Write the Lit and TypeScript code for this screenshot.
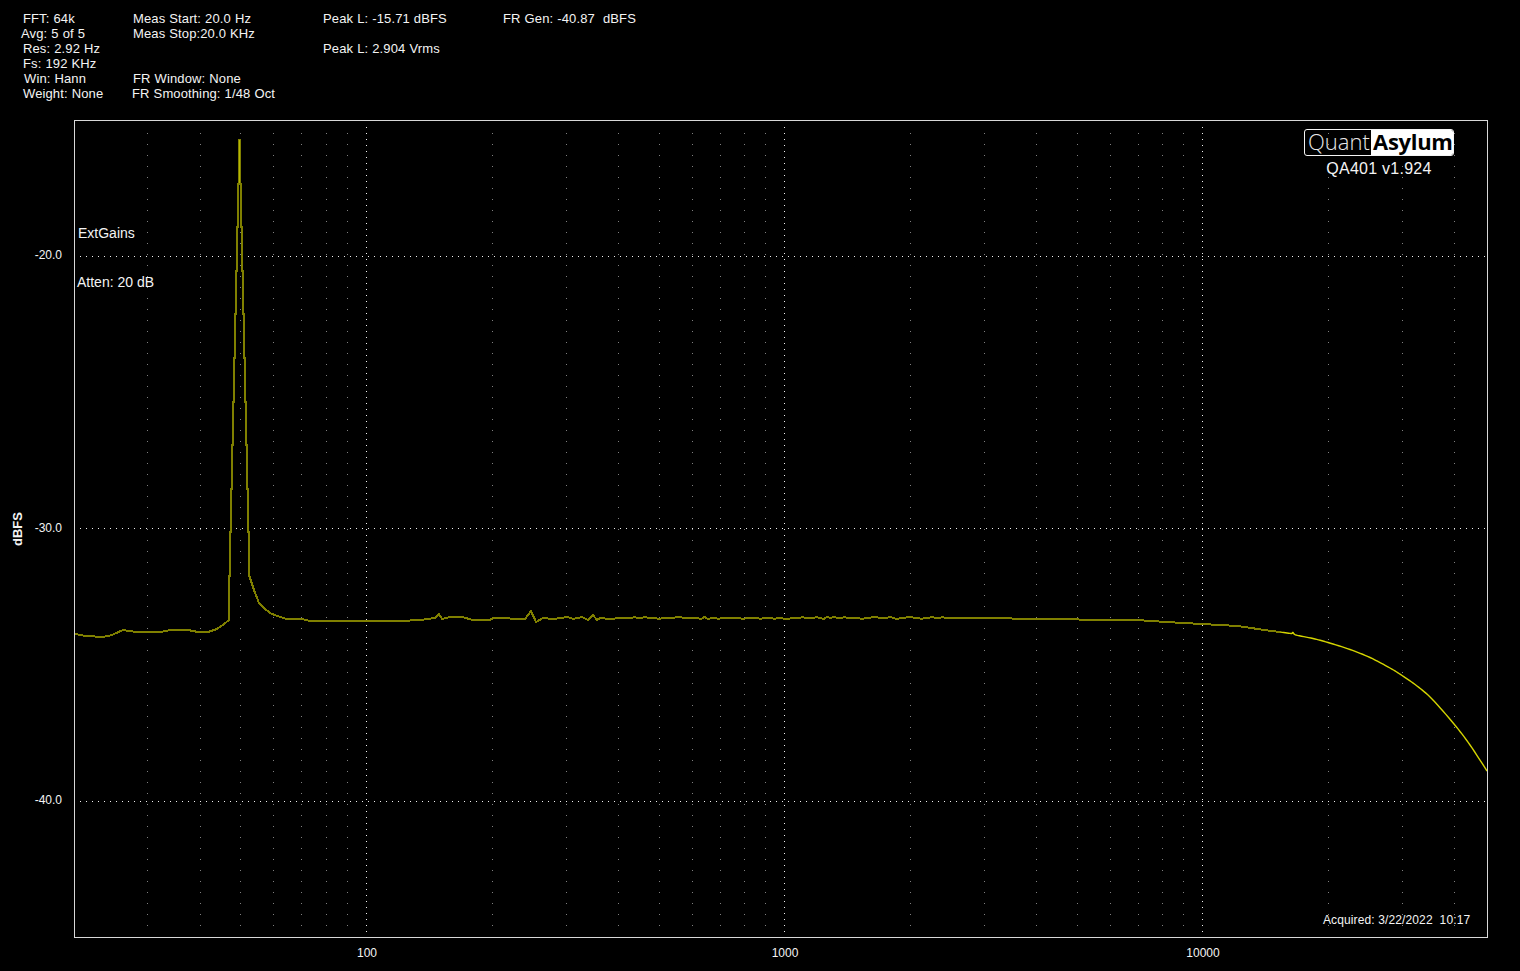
import { LitElement, html, css, svg } from "lit";
import { customElement } from "lit/decorators.js";

const MINOR = [147,200,240,273,301,326,347,492,566,618,659,692,720,744,765,910,984,1036,1077,1110,1138,1162,1183,1328,1402,1454];
const MAJOR_V = [366,784,1202];
const MAJOR_H = [256,528,801];

type P = [number, number];
const LEFT_CURVE: P[] = [[75,634],[86,636],[103,637],[112,635],[123,630],[136,632],[160,632],[171,630],[188,630],[198,632],[208,632],[217,629],[224,624],[229,620]];
const RIGHT_TAIL: P[] = [[249,575],[254,590],[259,603],[264,608],[270,613],[277,616],[287,619],[302,619],[310,621],[400,621],[420,620],[435,618],[439,614],[442,619],[450,617],[462,617],[473,620],[490,620],[493,618],[508,618],[512,619],[525,619],[531,611],[536,622],[543,618],[553,619],[568,617],[573,619],[582,617],[588,620],[593,615],[597,620],[600,618]];
const SMOOTH: P[] = [[950,618],[1073,619],[1085,620],[1137,620],[1166,622],[1202,624],[1238,626],[1271,631],[1280,632]];
const ROLLOFF: P[] = [[1280,632],[1291,633.5],[1293,632.5],[1296,635],[1313,638.5],[1328,642.5],[1350,649.5],[1370,657.5],[1390,668],[1402,675.5],[1417,686],[1432,699],[1454,724],[1470,745],[1487,771]];

function noise(): P[] {
  const pts: P[] = [];
  let seed = 37;
  for (let x = 603; x < 950; x += 3.5) {
    seed = (seed * 73 + 41) % 251;
    const j = seed % 5 === 0 ? 1 : seed % 5 === 1 ? -1 : 0;
    pts.push([x, 618 + j]);
  }
  return pts;
}

function peak(): { left: P[]; right: P[] } {
  const step = 43.6;
  const left: P[] = [[229, 620]];
  for (let k = 10; k >= 0; k--) {
    left.push([239 - k, 140 + step * (k + 1)]);
    left.push([239 - k, 140 + step * k]);
  }
  const right: P[] = [];
  for (let k = 0; k <= 9; k++) {
    right.push([240 + k, 140 + step * k]);
    right.push([240 + k, 140 + step * (k + 1)]);
  }
  right.push([249, 575]);
  return { left, right };
}

/** Catmull-Rom resampling, so the roll-off reads as a curve and not as a polygon. */
function curve(a: P[], n = 8): P[] {
  const out: P[] = [];
  for (let i = 0; i < a.length - 1; i++) {
    const p0 = a[Math.max(0, i - 1)], p1 = a[i], p2 = a[i + 1], p3 = a[Math.min(a.length - 1, i + 2)];
    for (let s = 0; s < n; s++) {
      const t = s / n, t2 = t * t, t3 = t2 * t;
      const f = (c: 0 | 1) =>
        0.5 * (2 * p1[c] + (p2[c] - p0[c]) * t + (2 * p0[c] - 5 * p1[c] + 4 * p2[c] - p3[c]) * t2 + (3 * p1[c] - p0[c] - 3 * p2[c] + p3[c]) * t3);
      out.push([f(0), f(1)]);
    }
  }
  out.push(a[a.length - 1]);
  return out;
}

const pts = (a: P[]) => a.map(([x, y]) => `${x},${y}`).join(" ");

@customElement("app-root")
export class AppRoot extends LitElement {
  static styles = css`
    :host {
      display: block;
      width: 1520px;
      height: 971px;
      background: #000;
      color: #f4f4f4;
      font-family: "Liberation Sans", Arial, sans-serif;
      font-size: 12px;
      overflow: hidden;
    }
    .header {
      display: flex;
      height: 120px;
      box-sizing: border-box;
      padding: 11px 0 0 23px;
      font-size: 13px;
      letter-spacing: 0.12px;
      word-spacing: 0.3px;
      line-height: 15px;
      white-space: pre;
    }
    .col { display: flex; flex-direction: column; }
    .line { height: 15px; }
    .c1 { width: 110px; }
    .c2 { width: 190px; }
    .c3 { width: 180px; }
    .l2 { margin-left: -2px; }
    .r1 { margin-left: 1px; }
    .l1 { margin-left: -1px; }
    .plot-row { position: relative; width: 1520px; height: 851px; }
    .plot {
      position: absolute;
      left: 74px;
      top: 0;
      width: 1414px;
      height: 818px;
    }
    svg { display: block; position: absolute; inset: 0; }
    .tick { position: absolute; line-height: 15px; white-space: pre; }
    .ytick { right: 1458px; text-align: right; }
    .xtick { top: 826px; width: 60px; margin-left: -30px; text-align: center; }
    .y20 { top: 128px; }
    .y30 { top: 401px; }
    .y40 { top: 673px; }
    .x100 { left: 367px; }
    .x1000 { left: 785px; }
    .x10000 { left: 1203px; }
    .yname {
      position: absolute;
      left: 17px;
      top: 409px;
      font-size: 13px;
      font-weight: 700;
      line-height: 15px;
      transform: translate(-50%, -50%) rotate(-90deg);
    }
    .note { position: absolute; font-size: 14px; line-height: 16px; white-space: pre; }
    .ext { left: 4px; top: 105px; }
    .atten { left: 3px; top: 154px; }
    .acquired {
      position: absolute;
      left: 1249px;
      top: 793px;
      line-height: 15px;
      letter-spacing: 0.12px;
      white-space: pre;
    }
    .brand {
      position: absolute;
      left: 1230px;
      top: 9px;
      width: 150px;
      display: flex;
      flex-direction: column;
      align-items: center;
    }
    .logo {
      display: flex;
      width: 150px;
      height: 27px;
      box-sizing: border-box;
      border: 1px solid #f4f4f4;
      border-radius: 3px;
      font-family: "Open Sans", "Liberation Sans", sans-serif;
      font-size: 22px;
      line-height: 23px;
    }
    .quant { font-weight: 300; padding-left: 3px; width: 66px; box-sizing: border-box; color: #e8e8e8; }
    .asylum { flex: 1; background: #fff; color: #000; font-weight: 700; padding-left: 2px; letter-spacing: -0.3px; border-radius: 0 2px 2px 0; }
    .ver { font-size: 16px; line-height: 18px; margin-top: 4px; letter-spacing: 0.25px; color: #f4f4f4; }
  `;

  private grid() {
    return html`
      ${MINOR.map(x => svg`<line x1=${x + 0.5} x2=${x + 0.5} y1="133" y2="926" stroke="#808080" stroke-dasharray="1 10" shape-rendering="crispEdges"></line>`)}
      ${MAJOR_V.map(x => svg`<line x1=${x + 0.5} x2=${x + 0.5} y1="127" y2="932" stroke="#f0f0f0" stroke-dasharray="1 5" shape-rendering="crispEdges"></line>`)}
      ${MAJOR_H.map(y => svg`<line x1="80" x2="1486" y1=${y + 0.5} y2=${y + 0.5} stroke="#f0f0f0" stroke-dasharray="1 5" shape-rendering="crispEdges"></line>`)}
    `;
  }

  render() {
    const { left, right } = peak();
    const olive = [...LEFT_CURVE.slice(0, -1), ...left, ...right, ...RIGHT_TAIL, ...noise(), ...SMOOTH];
    const tail = curve(ROLLOFF);
    return html`
      <div class="header">
        <div class="col c1">
          <div class="line">FFT: 64k</div>
          <div class="line l2">Avg: 5 of 5</div>
          <div class="line">Res: 2.92 Hz</div>
          <div class="line">Fs: 192 KHz</div>
          <div class="line r1">Win: Hann</div>
          <div class="line">Weight: None</div>
        </div>
        <div class="col c2">
          <div class="line">Meas Start: 20.0 Hz</div>
          <div class="line">Meas Stop:20.0 KHz</div>
          <div class="line"></div>
          <div class="line"></div>
          <div class="line">FR Window: None</div>
          <div class="line l1">FR Smoothing: 1/48 Oct</div>
        </div>
        <div class="col c3">
          <div class="line">Peak L: -15.71 dBFS</div>
          <div class="line"></div>
          <div class="line">Peak L: 2.904 Vrms</div>
        </div>
        <div class="col">
          <div class="line">FR Gen: -40.87  dBFS</div>
        </div>
      </div>
      <div class="plot-row">
        <div class="yname">dBFS</div>
        <div class="tick ytick y20">-20.0</div>
        <div class="tick ytick y30">-30.0</div>
        <div class="tick ytick y40">-40.0</div>
        <div class="plot">
          <svg width="1414" height="818" viewBox="74 120 1414 818" xmlns="http://www.w3.org/2000/svg">
            ${this.grid()}
            <polyline points=${pts(olive)} fill="none" stroke="#808000" stroke-width="2" shape-rendering="crispEdges"></polyline>
            <line x1="239.9" x2="239.9" y1="140" y2="183" stroke="#b8b800" stroke-width="1" shape-rendering="crispEdges"></line>
            <polyline points=${pts(tail)} fill="none" stroke="#d4d400" stroke-width="1.4"></polyline>
            <rect x="74.5" y="120.5" width="1413" height="817" fill="none" stroke="#d8d8d8" shape-rendering="crispEdges"></rect>
          </svg>
          <div class="note ext">ExtGains</div>
          <div class="note atten">Atten: 20 dB</div>
          <div class="brand">
            <div class="logo"><span class="quant">Quant</span><span class="asylum">Asylum</span></div>
            <div class="ver">QA401 v1.924</div>
          </div>
          <div class="acquired">Acquired: 3/22/2022  10:17</div>
        </div>
        <div class="tick xtick x100">100</div>
        <div class="tick xtick x1000">1000</div>
        <div class="tick xtick x10000">10000</div>
      </div>
    `;
  }
}
